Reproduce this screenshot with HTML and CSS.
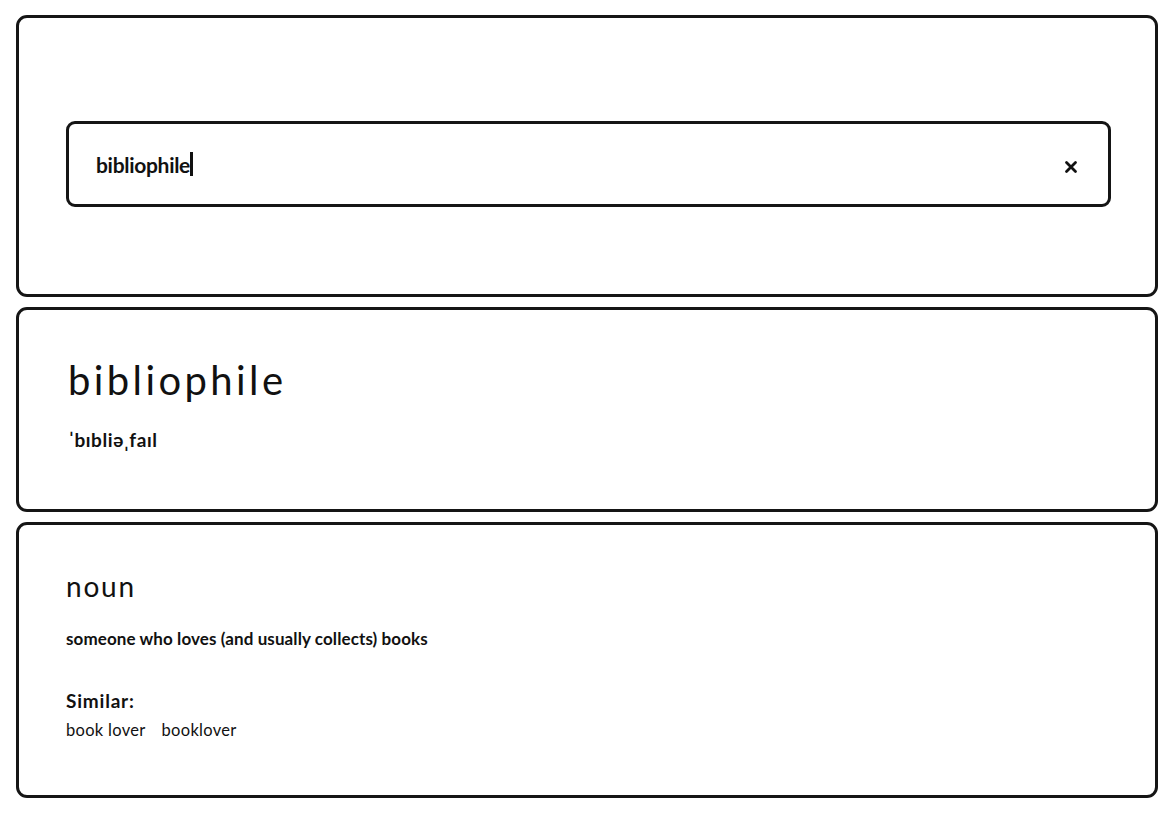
FILE: index.html
```html
<!DOCTYPE html>
<html lang="en">
<head>
<meta charset="utf-8">
<title>Dictionary</title>
<link rel="stylesheet" href="styles.css">
</head>
<body>
<main class="page">
  <section class="card card-search">
    <div class="search-box">
      <span class="search-text">bibliophile<span class="caret"></span></span>
      <button class="clear-btn" aria-label="Clear">
        <svg width="14" height="14" viewBox="0 0 14 14"><path d="M2.5 2.5 L11.5 11.5 M11.5 2.5 L2.5 11.5" stroke="#111" stroke-width="2.8" stroke-linecap="round"/></svg>
      </button>
    </div>
  </section>
  <section class="card card-word">
    <h1 class="word">bibliophile</h1>
    <p class="phonetic">ˈbɪbliəˌfaɪl</p>
  </section>
  <section class="card card-meaning">
    <h2 class="pos">noun</h2>
    <p class="definition">someone who loves (and usually collects) books</p>
    <h3 class="similar-title">Similar:</h3>
    <div class="similar-list">
      <span class="similar-item">book lover</span>
      <span class="similar-item">booklover</span>
    </div>
  </section>
</main>
</body>
</html>
```

FILE: styles.css
```css
* { box-sizing: border-box; }
html, body { margin: 0; padding: 0; background: #fff; }
body {
  font-family: Lato, "Open Sans", "Liberation Sans", sans-serif;
  color: #111;
}
.page {
  padding: 15px 17px 0 16px;
  display: flex;
  flex-direction: column;
  gap: 10px;
}
.card {
  border: 3px solid #151515;
  border-radius: 11px;
}
.card-search {
  height: 282px;
  padding: 103px 44px 0 47px;
}
.search-box {
  height: 86px;
  border: 3px solid #151515;
  border-radius: 9px;
  display: flex;
  align-items: center;
  justify-content: space-between;
  padding: 0 30px 0 27px;
}
.search-text {
  font-size: 21px;
  font-weight: 700;
  letter-spacing: -0.3px;
  display: inline-flex;
  align-items: center;
}
.caret {
  display: inline-block;
  width: 2.5px;
  height: 24px;
  background: #111;
  margin-left: 0;
}
.clear-btn {
  border: 0;
  background: none;
  padding: 0;
  display: flex;
  margin-top: 6px;
}
.card-word {
  height: 205px;
  padding: 46px 50px 0 49px;
}
.word {
  margin: 0;
  font-size: 40px;
  font-weight: 400;
  letter-spacing: 3.4px;
  line-height: 48px;
}
.phonetic {
  margin: 24px 0 0 1px;
  font-size: 19px;
  font-weight: 700;
  letter-spacing: 0.6px;
  line-height: 24px;
}
.card-meaning {
  height: 276px;
  padding: 44px 50px 0 47px;
}
.pos {
  margin: 0;
  font-size: 28px;
  font-weight: 400;
  letter-spacing: 1.8px;
  line-height: 34px;
}
.definition {
  margin: 25px 0 0;
  font-size: 17px;
  font-weight: 700;
  letter-spacing: 0.1px;
  line-height: 22px;
}
.similar-title {
  margin: 39px 0 0;
  font-size: 19px;
  font-weight: 700;
  letter-spacing: 0.8px;
  line-height: 24px;
}
.similar-list {
  display: flex;
  gap: 16px;
  margin-top: 7px;
  font-size: 16.5px;
  letter-spacing: 0.3px;
  line-height: 20px;
}
```
